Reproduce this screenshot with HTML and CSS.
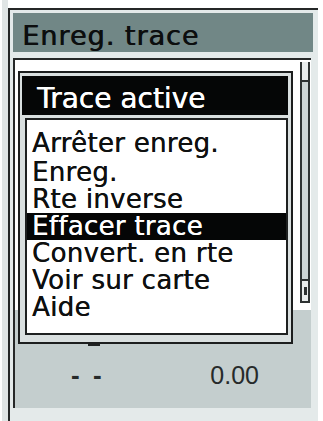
FILE: index.html
```html
<!DOCTYPE html>
<html lang="fr">
<head>
<meta charset="utf-8">
<title>Enreg. trace</title>
<link rel="stylesheet" href="styles.css">
</head>
<body>
<div class="bezel">
  <div class="frame">
    <div class="titlebar">Enreg. trace</div>
    <div class="panel">
      <div class="list-area">
        <div class="scroll">
          <div class="cap-top"></div>
          <div class="track"></div>
          <div class="cap-bottom"><span class="knob"></span></div>
        </div>
      </div>
      <div class="bottom-area">
        <div class="tab"></div>
        <div class="values">
          <span class="dashes">- -</span>
          <span class="num">0.00</span>
        </div>
      </div>
      <div class="popup">
        <div class="popup-head">Trace active</div>
        <ul class="menu">
          <li class="item first">Arrêter enreg.</li>
          <li class="item">Enreg.</li>
          <li class="item">Rte inverse</li>
          <li class="item selected">Effacer trace</li>
          <li class="item">Convert. en rte</li>
          <li class="item">Voir sur carte</li>
          <li class="item">Aide</li>
        </ul>
      </div>
    </div>
  </div>
</div>
</body>
</html>
```

FILE: styles.css
```css
html, body {
  margin: 0;
  padding: 0;
  background: #ffffff;
}

body {
  width: 323px;
  height: 421px;
  overflow: hidden;
}

.bezel {
  margin-left: 2px;
  border-left: 6px solid #e0e5e5;
  padding-top: 8px;
  height: 413px;
}

.frame {
  width: 300px;
  height: 403px;
  border-top: 2px solid #252727;
  border-left: 2px solid #252727;
  border-bottom: 3px solid #252727;
  background: #e4eaea;
  padding: 3px 5px 5px 3px;
  box-sizing: content-box;
  display: flex;
  flex-direction: column;
}

.titlebar {
  height: 39px;
  box-sizing: border-box;
  padding: 7px 0 0 9px;
  background: #718786;
  color: #0c0e0e;
  font-family: "Comic Sans MS", "DejaVu Sans", sans-serif;
  font-size: 27px;
  line-height: 32px;
  letter-spacing: 1px;
  text-shadow: 0.7px 0 0 #0c0e0e;
  white-space: nowrap;
}

.panel {
  position: relative;
  margin-top: 6px;
  margin-right: 2px;
  height: 350px;
  box-sizing: border-box;
  border-top: 2px solid #262828;
  border-left: 2px solid #262828;
  background: #c4cece;
  display: flex;
  flex-direction: column;
}

.list-area {
  height: 250px;
  background: #ffffff;
  display: flex;
  justify-content: flex-end;
}

.scroll {
  width: 6px;
  margin: 2px 1px 7px 0;
  border-left: 2px solid #2e3232;
  border-right: 2px solid #2e3232;
  background: #cdd5d5;
  display: flex;
  flex-direction: column;
}

.cap-top {
  height: 18px;
  background: #e8ecec;
  border-bottom: 2px solid #2e3232;
}

.track {
  flex: 1;
}

.cap-bottom {
  height: 20px;
  background: #e8ecec;
  border-top: 2px solid #2e3232;
  border-bottom: 2px solid #2e3232;
  display: flex;
  align-items: center;
  justify-content: center;
}

.knob {
  width: 3px;
  height: 8px;
  background: #2e3232;
}

.bottom-area {
  flex: 1;
  display: flex;
  flex-direction: column;
}

.tab {
  margin: 26px 0 0 73px;
  width: 12px;
  height: 10px;
  background: #1f2222;
}

.values {
  display: flex;
  justify-content: space-between;
  align-items: baseline;
  padding: 0 52px 0 56px;
  margin-top: 14px;
  font-family: "Liberation Sans", Arial, sans-serif;
  color: #262a2a;
  line-height: 30px;
}

.dashes {
  font-size: 26px;
  font-weight: bold;
  letter-spacing: 3px;
}

.num {
  font-size: 25px;
}

.popup {
  position: absolute;
  left: 3px;
  top: 11px;
  width: 275px;
  height: 273px;
  box-sizing: border-box;
  border: 2px solid #1c1e1e;
  background: #d9dfdf;
  padding: 3px 3px 7px 2px;
  display: flex;
  flex-direction: column;
  font-family: "Comic Sans MS", "DejaVu Sans", sans-serif;
}

.popup-head {
  height: 39px;
  box-sizing: border-box;
  padding: 7px 0 0 15px;
  background: #050606;
  color: #ffffff;
  font-size: 28px;
  line-height: 32px;
  text-shadow: 0.4px 0 0 #ffffff;
  white-space: nowrap;
}

.menu {
  list-style: none;
  margin: 3px 0 0 3px;
  padding: 10px 0 0 0;
  flex: 1;
  border: 2px solid #1e2020;
  background: #ffffff;
}

.item {
  height: 27px;
  padding-left: 5px;
  font-size: 26px;
  line-height: 27px;
  letter-spacing: 0.3px;
  color: #0e1010;
  text-shadow: 0.3px 0 0 #0e1010;
  white-space: nowrap;
}

.item.first {
  margin-bottom: 2px;
}

.item.selected {
  background: #050606;
  color: #ffffff;
  text-shadow: 0.3px 0 0 #ffffff;
}
```
